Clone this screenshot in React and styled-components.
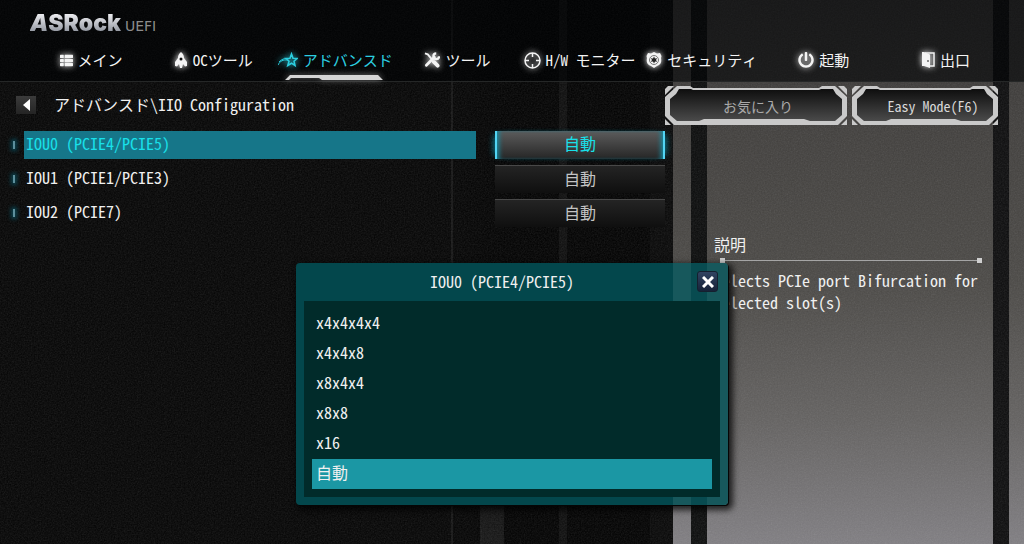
import React from 'react'
import styled, { createGlobalStyle, css } from 'styled-components'
import { FaThList, FaPowerOff } from 'react-icons/fa'

const fontStack = `'Noto Sans Mono CJK JP', 'Noto Sans CJK JP', 'Liberation Mono', monospace`

const colors = {
  accent: '#19e0ea',
  text: '#f0f0f0',
  silver: '#c9c9c9',
  panel: '#03474c',
  panelLight: '#17585c',
}

const GlobalStyle = createGlobalStyle`
  * {
    box-sizing: border-box;
  }
  body {
    margin: 0;
    background: #070707;
  }
  button {
    border: 0;
    padding: 0;
    background: none;
    color: inherit;
    font: inherit;
    cursor: pointer;
  }
`

const Screen = styled.div`
  position: relative;
  isolation: isolate;
  min-height: 100vh;
  overflow: hidden;
  font-family: ${fontStack};
  font-size: 16px;
  line-height: 22px;
  color: ${colors.text};
  background:
    linear-gradient(transparent 400px, rgba(60, 60, 60, 0.35)) right 520px top 0 / 24px 100% no-repeat,
    linear-gradient(to left, transparent 15px, #0c0c0d 15px 31px, transparent 31px 317px, #0a0b0b 317px 333px, transparent 333px 351px, #060606 351px 374px, #000 374px 457px, #0c0c0c 457px 465px, #000 465px 520px, #030303 571px, #141414 571px 573px, #030303 573px 100%),
    linear-gradient(#353332, #403e3c 120px, #4a4845 280px, #636160 420px, #807e82);
`

const Grain = styled.svg`
  position: absolute;
  inset: 0;
  z-index: -1;
  width: 100%;
  height: 100%;
  opacity: 0.14;
`

const Header = styled.header`
  height: 82px;
  padding: 13px 17px 0 30px;
  background: rgba(0, 2, 4, 0.58);
  border-bottom: 1px solid #252727;
`

const Brand = styled.div`
  display: flex;
  align-items: flex-end;
  gap: 4px;
  height: 20px;
`

const BrandName = styled.span`
  font: 900 23px/20px Inter, sans-serif;
  color: transparent;
  background: linear-gradient(#f2f2f5, #8d929c);
  background-clip: text;
`

const BrandInitial = styled.span`
  font-style: italic;
`

const BrandSub = styled.span`
  font: 14px/14px 'DejaVu Sans', sans-serif;
  color: #8d8d8d;
`

const Nav = styled.nav`
  display: grid;
  grid-template-columns: repeat(8, 1fr);
  height: 48px;
`

const NavItem = styled.button`
  position: relative;
  display: flex;
  justify-content: center;
  align-items: center;
  gap: 5px;
  padding-top: 6px;
  font-size: 15px;
  white-space: nowrap;
  color: ${({ $active }) => ($active ? '#2ccfe0' : '#f4f4f4')};

  svg {
    flex: none;
    filter: drop-shadow(0 0 3px currentColor);
  }
`

const Marker = styled.svg`
  position: absolute;
  bottom: 0;
  left: 11px;
  color: #777;
`

const Body = styled.main`
  display: grid;
  grid-template-columns: minmax(0, 665fr) minmax(0, 333fr);
  padding-right: 26px;
`

const Settings = styled.section`
  padding-top: 12px;
`

const Crumb = styled.div`
  display: flex;
  align-items: center;
  gap: 18px;
  height: 22px;
  padding-left: 16px;
  margin-bottom: 15px;
`

const CrumbTitle = styled.h1`
  margin: 0;
  padding-bottom: 2px;
  font-size: 16px;
  font-weight: 400;
`

const BackButton = styled.button`
  display: grid;
  place-items: center;
  width: 20px;
  height: 18px;
  background: linear-gradient(#3b3b3b, #242424);
`

const Row = styled.div`
  display: grid;
  grid-template-columns: 24px minmax(0, 1fr) 170px;
  align-items: center;
  height: 28px;
  margin-bottom: 6px;
`

const Bullet = styled.span`
  justify-self: center;
  width: 2px;
  height: 8px;
  margin-left: 4px;
  background: #5d8f9c;
  box-shadow: 0 0 4px 2px #0b4552;
`

const RowLabel = styled.span`
  height: 28px;
  margin-right: 19px;
  padding-left: 2px;
  line-height: 25px;
  ${({ $active }) =>
    $active &&
    css`
      color: ${colors.accent};
      background: #167689;
    `}
`

const RowValue = styled.button`
  height: 28px;
  padding-bottom: 4px;
  line-height: 22px;
  color: #c4c4c4;
  background: linear-gradient(#242424, #0f0f0f);
  border-top: 1px solid #484848;
  ${({ $active }) =>
    $active &&
    css`
      color: ${colors.accent};
      background: linear-gradient(#5c5c5c, #262626);
      border: solid #52d5f5;
      border-width: 0 2px;
      box-shadow: 5px 0 6px -4px #0b7f96, -5px 0 6px -4px #0b7f96, inset 5px 0 5px -3px #168ca3, inset -5px 0 5px -3px #168ca3;
    `}
`

const Side = styled.aside`
  padding-top: 4px;
`

const Actions = styled.div`
  display: grid;
  grid-template-columns: 182fr 146fr;
  gap: 5px;
`

const FrameButton = styled.button`
  position: relative;
  height: 39px;
  padding-left: ${({ $shift }) => ($shift ? '16px' : '4px')};
  font-size: 14px;
  color: ${({ $shift }) => ($shift ? '#d8d8d8' : '#a9a9a9')};

  svg {
    position: absolute;
    inset: 0;
    z-index: -1;
    width: 100%;
    height: 100%;
  }
`

const Help = styled.div`
  padding: 108px 0 0 49px;
`

const HelpTitle = styled.h2`
  margin: 0;
  font-size: 16px;
  font-weight: 400;
`

const HelpRule = styled.div`
  display: flex;
  align-items: center;
  justify-content: space-between;
  height: 5px;
  margin: 3px 16px 6px 6px;
  background: linear-gradient(#a5a5a5, #a5a5a5) center / 100% 1px no-repeat;

  &::before,
  &::after {
    content: '';
    width: 5px;
    height: 5px;
    background: #cfcfcf;
  }
`

const HelpText = styled.p`
  margin: 0 -8px 0 0;
`

const Overlay = styled.div`
  position: absolute;
  inset: 0;
  display: flex;
  justify-content: center;
  align-items: flex-start;
  padding-top: 263px;
`

const Dialog = styled.div`
  position: relative;
  width: 432px;
  padding: 0 8px 8px;
  border-radius: 4px;
  background: linear-gradient(to left, ${colors.panelLight} 21px, #084b50 21px 37px, ${colors.panelLight} 37px 55px, ${colors.panel} 55px);
  box-shadow: 1px 1px 0 #050505, 3px 3px 6px 2px rgba(0, 0, 0, 0.75);
`

const DialogTitle = styled.h2`
  margin: 0;
  padding: 0 20px 2px 0;
  font-size: 16px;
  font-weight: 400;
  line-height: 36px;
  text-align: center;
`

const CloseButton = styled.button`
  position: absolute;
  top: 8px;
  right: 10px;
  display: grid;
  place-items: center;
  width: 21px;
  height: 21px;
  border: 1px solid #15202f;
  border-radius: 3px;
  background: linear-gradient(#314361, #172238);
`

const Options = styled.div`
  display: flex;
  flex-direction: column;
  padding: 8px;
  background: #012b2a;
`

const Option = styled.button`
  height: 30px;
  padding: 0 0 4px 4px;
  line-height: 26px;
  text-align: left;
  background: ${({ $active }) => ($active ? '#1b97a4' : 'transparent')};
`

const RocketIcon = () => (
  <svg width="14" height="16" viewBox="0 0 14 16" fill="currentColor">
    <path d="M7 0C4.500 2 4 4 4 6L1 10v4l2 .5L5 12l1 4h2l1-4 2 2.500 2-.5v-4l-3-4c0-2-.5-4-3-6z" />
    <circle cx="7" cy="7" r="1.500" fill="#111" />
  </svg>
)

const StarIcon = () => (
  <svg width="20" height="16" viewBox="0 0 20 16" fill="none" stroke="currentColor" strokeWidth="1.600">
    <path d="m13.500 2 1.500 4.200 4.200.2-3.200 2.800 1 4.300-3.500-2.300-3.700 2.300 1.200-4.300-3-2.800 4-.2z" />
    <path d="M0 13C2 9 5 7.500 10 8M1 10c3-3 5-3.500 8-3.500" strokeWidth="1" />
  </svg>
)

const ToolsIcon = () => (
  <svg width="16" height="16" viewBox="0 0 17 16" fill="none" stroke="currentColor">
    <path d="M1 1l3 1 5 6" strokeWidth="2" />
    <path d="m10.500 10 4 4" strokeWidth="4" strokeLinecap="round" />
    <path d="M2.500 13.500 11 5" strokeWidth="3" strokeLinecap="round" />
    <path d="M13 1a3 3 0 1 0 3 3" strokeWidth="2.500" />
  </svg>
)

const TargetIcon = () => (
  <svg width="17" height="17" viewBox="0 0 17 17" fill="none" stroke="currentColor" strokeWidth="1.500">
    <circle cx="8.500" cy="8.500" r="7.500" />
    <path d="M8.500 1v4M8.500 12v4M1 8.500h4M12 8.500h4" />
  </svg>
)

const BadgeIcon = () => (
  <svg width="16" height="16" viewBox="0 0 16 16">
    <path d="M2 1l3 .5L8 0l3 1.500L14 1l1.500 3-.5 2c1 5-1 7-4 8l-3 2-3-2c-3-1-5-3-4-8L.5 4z" fill="currentColor" />
    <circle cx="8" cy="8" r="4.500" fill="none" stroke="#777" />
    <path d="m8 4.500 1 2 2.200-.3L10 8l1.200 1.800L9 9.500l-1 2-1-2-2.200.3L6 8 4.800 6.200l2.200.3z" fill="#222" />
  </svg>
)

const DoorIcon = () => (
  <svg width="13" height="16" viewBox="0 0 13 16">
    <path d="M3 1h9v13H8" fill="none" stroke="currentColor" strokeWidth="1.500" />
    <path d="M0 0h2l6 2.500V16l-6-2H0z" fill="currentColor" />
    <path d="M6 8v2" stroke="#222" />
  </svg>
)

const Frame = ({ width }) => (
  <svg viewBox={`0 0 ${width} 39`} preserveAspectRatio="none" aria-hidden="true">
    <defs>
      <linearGradient id={`fill${width}`} x1="0" y1="0" x2="0" y2="1">
        <stop offset="0" stopColor="#0c0c0c" />
        <stop offset="1" stopColor="#4e4e4e" />
      </linearGradient>
    </defs>
    <path d={`M12 2H${width - 12}L${width - 3} 11V29L${width - 11} 37H11L3 29V11z`} fill={`url(#fill${width})`} />
    <path
      fillRule="evenodd"
      fill={colors.silver}
      d={`M12 0H25L28 2H${width - 28}L${width - 25} 0H${width - 12}L${width} 11V30L${width - 9} 39H9L0 30V11z
        M14 3L11 8 5 13V29L12 35H34L39 33H${width - 43}L${width - 37} 35H${width - 12}L${width - 5} 29V13L${width - 11} 8 ${width - 14} 3H${width - 26}L${width - 28} 4H28L26 3z`}
    />
    <path
      fill={colors.silver}
      d={`M0 9V3L3 0H9zM${width} 9V3L${width - 3} 0H${width - 9}zM0 33V39H6zM${width} 33V39H${width - 6}z`}
    />
  </svg>
)

const navItems = [
  { label: 'メイン', icon: <FaThList size={13} /> },
  { label: 'OCツール', icon: <RocketIcon /> },
  { label: 'アドバンスド', icon: <StarIcon />, active: true },
  { label: 'ツール', icon: <ToolsIcon /> },
  { label: 'H/W モニター', icon: <TargetIcon /> },
  { label: 'セキュリティ', icon: <BadgeIcon /> },
  { label: '起動', icon: <FaPowerOff size={16} /> },
  { label: '出口', icon: <DoorIcon /> },
]

const ports = ['IOU0 (PCIE4/PCIE5)', 'IOU1 (PCIE1/PCIE3)', 'IOU2 (PCIE7)']
const options = ['x4x4x4x4', 'x4x4x8', 'x8x4x4', 'x8x8', 'x16', '自動']

const App = () => {
  return (
    <Screen>
      <GlobalStyle />
      <Grain aria-hidden="true">
        <filter id="grain">
          <feTurbulence type="fractalNoise" baseFrequency="0.7" numOctaves="2" />
          <feColorMatrix type="saturate" values="0" />
        </filter>
        <rect width="100%" height="100%" filter="url(#grain)" />
      </Grain>
      <Header>
        <Brand>
          <BrandName>
            <BrandInitial>A</BrandInitial>SRock
          </BrandName>
          <BrandSub>UEFI</BrandSub>
        </Brand>
        <Nav>
          {navItems.map(({ label, icon, active }) => (
            <NavItem key={label} $active={active}>
              {icon}
              {label}
              {active && (
                <Marker width="98" height="7" viewBox="0 0 98 7">
                  <path d="M0 6 5 1h88l5 5H37l-3-2H6L4 6z" fill="#d5d5d5" />
                </Marker>
              )}
            </NavItem>
          ))}
        </Nav>
      </Header>
      <Body>
        <Settings>
          <Crumb>
            <BackButton aria-label="戻る">
              <svg width="7" height="12" viewBox="0 0 7 12">
                <path d="M7 0v12L0 6z" fill="#fff" />
              </svg>
            </BackButton>
            <CrumbTitle>アドバンスド\IIO Configuration</CrumbTitle>
          </Crumb>
          {ports.map((port, index) => (
            <Row key={port}>
              <Bullet />
              <RowLabel id={`port${index}`} $active={index === 0}>{port}</RowLabel>
              <RowValue aria-describedby={`port${index}`} $active={index === 0}>自動</RowValue>
            </Row>
          ))}
        </Settings>
        <Side>
          <Actions>
            <FrameButton>
              <Frame width={182} />
              お気に入り
            </FrameButton>
            <FrameButton $shift>
              <Frame width={146} />
              Easy Mode(F6)
            </FrameButton>
          </Actions>
          <Help>
            <HelpTitle>説明</HelpTitle>
            <HelpRule />
            <HelpText>Selects PCIe port Bifurcation for selected slot(s)</HelpText>
          </Help>
        </Side>
      </Body>
      <Overlay>
        <Dialog role="dialog" aria-labelledby="dialogTitle">
          <DialogTitle id="dialogTitle">IOU0 (PCIE4/PCIE5)</DialogTitle>
          <CloseButton aria-label="閉じる">
            <svg width="12" height="12" viewBox="0 0 12 12" stroke="#fff" strokeWidth="3">
              <path d="m1 1 10 10M11 1 1 11" />
            </svg>
          </CloseButton>
          <Options role="listbox" aria-labelledby="dialogTitle">
            {options.map((option) => (
              <Option key={option} role="option" aria-selected={option === '自動'} $active={option === '自動'}>
                {option}
              </Option>
            ))}
          </Options>
        </Dialog>
      </Overlay>
    </Screen>
  )
}

export default App
